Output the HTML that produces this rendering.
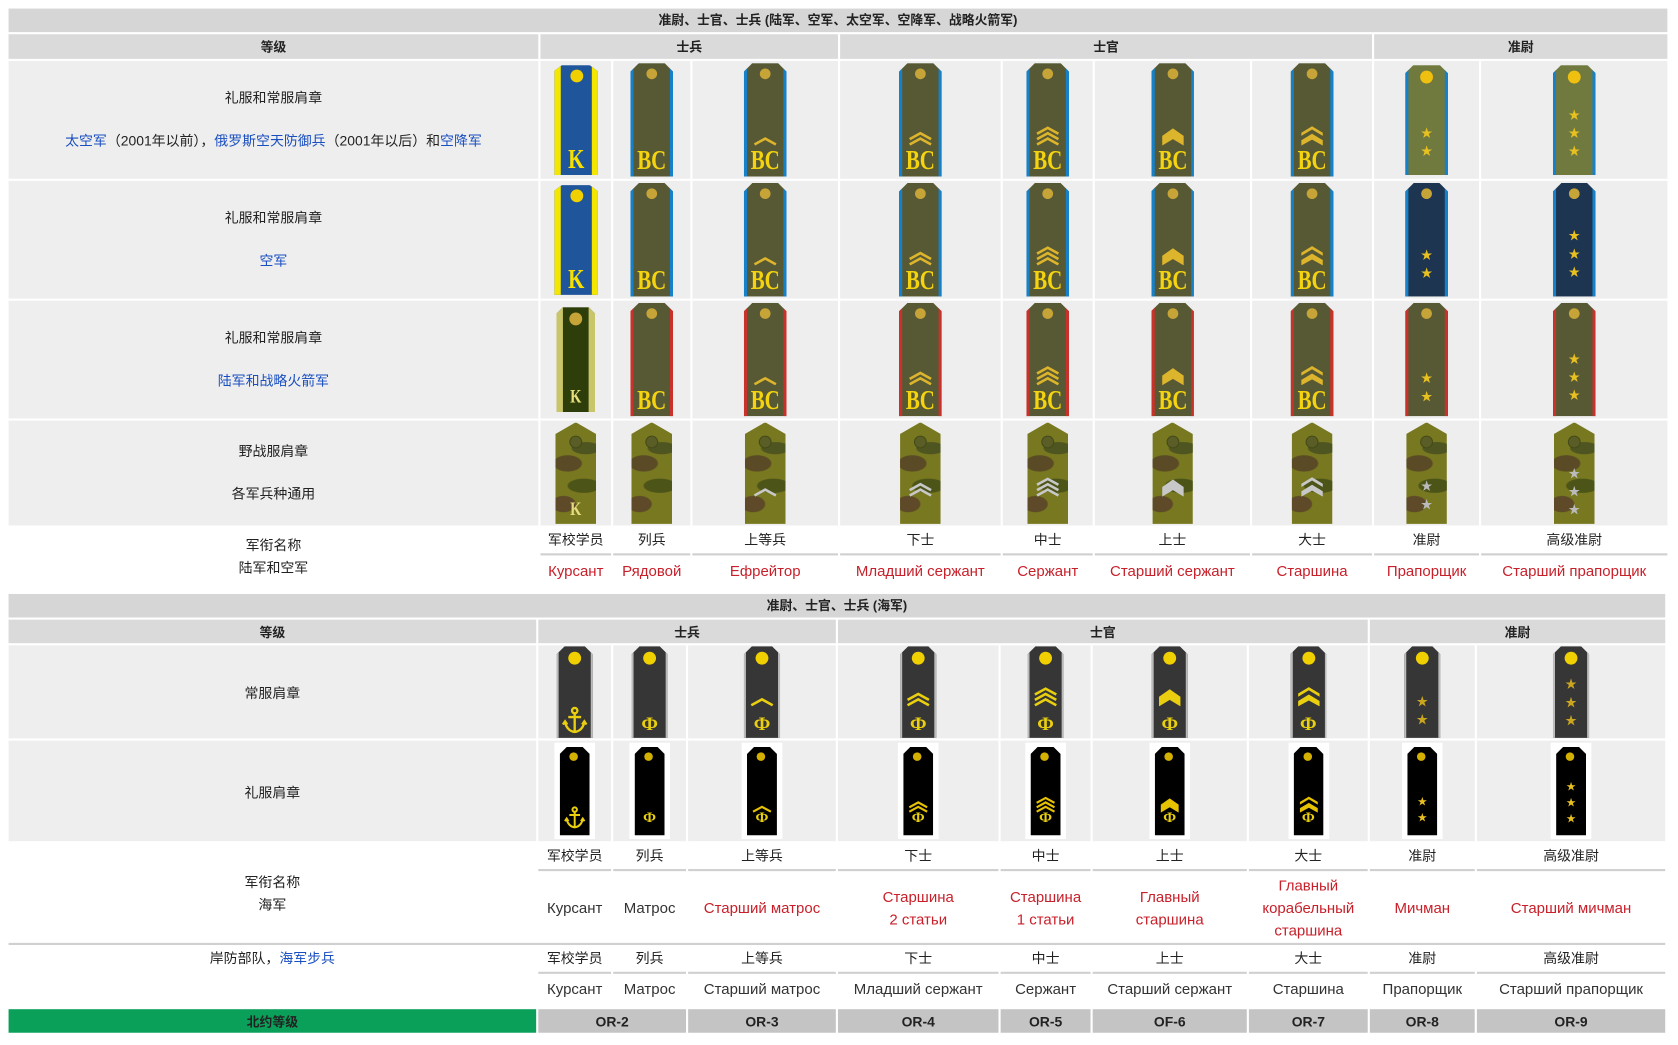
<!DOCTYPE html>
<html><head><meta charset="utf-8"><style>
body{margin:0;width:1678px;height:1045px;background:#fff;position:relative;overflow:hidden;font-family:"Liberation Sans","Noto Sans CJK SC",sans-serif;font-size:13px;color:#222}
#w{position:absolute;left:0;top:0;width:1568px;height:976px;transform:scale(1.0702);transform-origin:0 0}
.rw{position:absolute;left:8px;display:flex;gap:2px}
.rw>div{background:#eee;display:flex;align-items:center;justify-content:center;flex:none;position:relative;text-align:center}
.hd>div{background:#dadada;font-weight:bold;font-size:12px}
.t0{width:495px}.t1{width:66px}.t2{width:72px}.t3{width:136px}.t4{width:150px}.t5{width:84px}.t6{width:145px}.t7{width:112px}.t8{width:98px}.t9{width:174px}
.u0{width:493px}.u1{width:68px}.u2{width:68px}.u3{width:138px}.u4{width:150px}.u5{width:84px}.u6{width:144px}.u7{width:111px}.u8{width:98px}.u9{width:176px}
.title{position:absolute;left:8px;width:1550px;height:22px;background:#d6d6d6;font-weight:bold;font-size:12px;text-align:center;line-height:22px}
.lab{flex-direction:column;gap:20px}
.lab span{display:block;line-height:20px}
.bl{color:#1a4fc0}
.bd{position:relative;width:40px;height:106px;background:#575934;clip-path:polygon(0 8px,8px 0,32px 0,40px 8px,40px 100%,0 100%);box-shadow:inset 3px 0 #1680c8,inset -3px 0 #1680c8;color:#ddb52c}
.bd.r{box-shadow:inset 3px 0 #c8322a,inset -3px 0 #c8322a}
.bt{position:absolute;top:5px;left:15px;width:10px;height:10px;border-radius:50%;background:#c7a437}
.L{position:absolute;bottom:3px;left:0;width:100%;text-align:center;font:bold 26px/24px "Liberation Serif",serif;color:#f5d40f;transform:scaleX(.75)}
.cv{position:absolute;left:8px;bottom:29px;width:24px;height:20px}
.st{position:absolute;left:0;width:100%;text-align:center;font-size:11px;line-height:17px;color:#e8c020}
.ka{width:41px;height:103px;background:#1f559a;box-shadow:inset 6px 0 #f5e600,inset -6px 0 #f5e600;clip-path:polygon(0 6px,8px 0,33px 0,41px 6px,41px 100%,0 100%)}
.ka .bt{left:15px;top:4px;width:12px;height:12px;background:#f0d000}
.ka .L{color:#f5e000}
.kr{width:36px;height:98px;background:#2e3e0a;box-shadow:inset 6px 0 #c9c56a,inset -6px 0 #c9c56a;clip-path:polygon(0 6px,6px 0,30px 0,36px 6px,36px 100%,0 100%)}
.kr .bt{left:12px;width:12px;height:12px}
.kr .L{font-size:18px;color:#e8e07a}
.w1{width:40px;height:103px;background:#707a3f;box-shadow:inset 3px 0 #1680c8,inset -3px 0 #1680c8}
.w1 .bt{width:12px;height:12px;left:14px;background:#f0c010}
.w2{background:#1d3550}
.cm{width:38px;height:95px;box-shadow:none;clip-path:polygon(0 11px,50% 0,100% 11px,100% 100%,0 100%);background:radial-gradient(ellipse 14px 8px at 30% 40%,#5a4a25 90%,transparent),radial-gradient(ellipse 16px 7px at 70% 62%,#4d5418 90%,transparent),radial-gradient(ellipse 12px 8px at 20% 80%,#5e4a28 90%,transparent),radial-gradient(ellipse 14px 6px at 75% 25%,#4e5520 90%,transparent),#77781f;color:#c8c8c8}
.cm .bt{background:#5a5e26;border:1px solid #444a18;width:10px;height:10px;top:12px;left:13px}
.cm .L{font-size:18px;color:#e8dc80}
.n1{width:34px;height:86px;background:#363636;clip-path:polygon(0 8px,8px 0,26px 0,34px 8px,34px 100%,0 100%);box-shadow:inset 2px 0 #bbb,inset -2px 0 #bbb;color:#e9cf10}
.n1 .bt{left:11px;width:12px;height:12px;background:#f0d000}
.n1 .cv{left:5px;bottom:30px}
.fr{background:#fff;width:38px;height:90px;display:flex;align-items:center;justify-content:center}
.n2{width:28px;height:83px;background:#000;clip-path:polygon(0 7px,7px 0,21px 0,28px 7px,28px 100%,0 100%);color:#e6c200;position:relative}
.n2 .bt{left:9px;top:5px;width:8px;height:8px;background:#d4b000}
.n2 .cv{left:4px;width:20px;bottom:20px}
.F{position:absolute;bottom:4px;left:0;width:100%;text-align:center;font:bold 18px/20px "Liberation Serif",serif;color:#e9cf10}
.n2 .F{font-size:14px;bottom:6px}
.an{position:absolute;left:50%;bottom:4px;width:24px;height:26px;margin-left:-12px}
.n2 .an{width:20px;height:22px;margin-left:-10px;bottom:6px}
.nm>div{background:#fff;flex-direction:column;justify-content:flex-start}
.zh{height:24px;line-height:24px;width:100%;border-bottom:2px solid #d0d0d0;font-size:13px}
.ru{color:#c8202a;font-size:14px;line-height:28px}
.blk{color:#333}
</style></head><body>
<svg width="0" height="0" style="position:absolute">
<symbol id="c1" viewBox="0 0 24 20"><path d="M2 19L12 13.5L22 19" stroke="currentColor" stroke-width="2.4" fill="none"/></symbol>
<symbol id="c2" viewBox="0 0 24 20"><path d="M2 19L12 13.5L22 19M2 14L12 8.5L22 14" stroke="currentColor" stroke-width="2.4" fill="none"/></symbol>
<symbol id="c3" viewBox="0 0 24 20"><path d="M2 19L12 13.5L22 19M2 14L12 8.5L22 14M2 9L12 3.5L22 9" stroke="currentColor" stroke-width="2.4" fill="none"/></symbol>
<symbol id="c4" viewBox="0 0 24 20"><path d="M2 20L2 11L12 4L22 11L22 20L12 14Z" fill="currentColor"/></symbol>
<symbol id="c5" viewBox="0 0 24 20"><path d="M2 20L2 15L12 9L22 15L22 20L12 14.5Z M2 11L2 8L12 2L22 8L22 11L12 5Z" fill="currentColor"/></symbol>
<symbol id="anc" viewBox="0 0 24 26"><g stroke="#e9cf10" stroke-width="2.2" fill="none"><circle cx="12" cy="4" r="2.5"/><path d="M12 6.5V24M6 10H18M3 15Q5 23 12 24Q19 23 21 15"/><path d="M1 17L3 14L5 17M19 17L21 14L23 17"/></g></symbol>
</svg>
<div id="w">
<div class="title" style="top:8px">准尉、士官、士兵 (陆军、空军、太空军、空降军、战略火箭军)</div>
<div class="rw hd" style="top:32px;height:23px"><div class="t0">等级</div><div style="width:278px">士兵</div><div style="width:497px">士官</div><div class="t9" style="width:274px">准尉</div></div>

<div class="rw" style="top:57px;height:110px">
<div class="t0 lab"><span>礼服和常服肩章</span><span><span class="bl" style="display:inline">太空军</span>（2001年以前），<span class="bl" style="display:inline">俄罗斯空天防御兵</span>（2001年以后）和<span class="bl" style="display:inline">空降军</span></span></div>
<div class="t1"><div class="bd ka"><i class="bt"></i><b class="L">K</b></div></div>
<div class="t2"><div class="bd"><i class="bt"></i><b class="L">BC</b></div></div>
<div class="t3"><div class="bd"><i class="bt"></i><svg class="cv"><use href="#c1"/></svg><b class="L">BC</b></div></div>
<div class="t4"><div class="bd"><i class="bt"></i><svg class="cv"><use href="#c2"/></svg><b class="L">BC</b></div></div>
<div class="t5"><div class="bd"><i class="bt"></i><svg class="cv"><use href="#c3"/></svg><b class="L">BC</b></div></div>
<div class="t6"><div class="bd"><i class="bt"></i><svg class="cv"><use href="#c4"/></svg><b class="L">BC</b></div></div>
<div class="t7"><div class="bd"><i class="bt"></i><svg class="cv"><use href="#c5"/></svg><b class="L">BC</b></div></div>
<div class="t8"><div class="bd w1"><i class="bt"></i><span class="st" style="top:56px">★<br>★</span></div></div>
<div class="t9"><div class="bd w1"><i class="bt"></i><span class="st" style="top:39px">★<br>★<br>★</span></div></div>
</div>

<div class="rw" style="top:169px;height:110px">
<div class="t0 lab"><span>礼服和常服肩章</span><span class="bl">空军</span></div>
<div class="t1"><div class="bd ka"><i class="bt"></i><b class="L">K</b></div></div>
<div class="t2"><div class="bd"><i class="bt"></i><b class="L">BC</b></div></div>
<div class="t3"><div class="bd"><i class="bt"></i><svg class="cv"><use href="#c1"/></svg><b class="L">BC</b></div></div>
<div class="t4"><div class="bd"><i class="bt"></i><svg class="cv"><use href="#c2"/></svg><b class="L">BC</b></div></div>
<div class="t5"><div class="bd"><i class="bt"></i><svg class="cv"><use href="#c3"/></svg><b class="L">BC</b></div></div>
<div class="t6"><div class="bd"><i class="bt"></i><svg class="cv"><use href="#c4"/></svg><b class="L">BC</b></div></div>
<div class="t7"><div class="bd"><i class="bt"></i><svg class="cv"><use href="#c5"/></svg><b class="L">BC</b></div></div>
<div class="t8"><div class="bd w2"><i class="bt"></i><span class="st" style="top:60px">★<br>★</span></div></div>
<div class="t9"><div class="bd w2"><i class="bt"></i><span class="st" style="top:42px">★<br>★<br>★</span></div></div>
</div>

<div class="rw" style="top:281px;height:110px">
<div class="t0 lab"><span>礼服和常服肩章</span><span class="bl">陆军和战略火箭军</span></div>
<div class="t1"><div class="bd kr"><i class="bt"></i><b class="L">K</b></div></div>
<div class="t2"><div class="bd r"><i class="bt"></i><b class="L">BC</b></div></div>
<div class="t3"><div class="bd r"><i class="bt"></i><svg class="cv"><use href="#c1"/></svg><b class="L">BC</b></div></div>
<div class="t4"><div class="bd r"><i class="bt"></i><svg class="cv"><use href="#c2"/></svg><b class="L">BC</b></div></div>
<div class="t5"><div class="bd r"><i class="bt"></i><svg class="cv"><use href="#c3"/></svg><b class="L">BC</b></div></div>
<div class="t6"><div class="bd r"><i class="bt"></i><svg class="cv"><use href="#c4"/></svg><b class="L">BC</b></div></div>
<div class="t7"><div class="bd r"><i class="bt"></i><svg class="cv"><use href="#c5"/></svg><b class="L">BC</b></div></div>
<div class="t8"><div class="bd r"><i class="bt"></i><span class="st" style="top:63px">★<br>★</span></div></div>
<div class="t9"><div class="bd r"><i class="bt"></i><span class="st" style="top:45px">★<br>★<br>★</span></div></div>
</div>

<div class="rw" style="top:393px;height:98px">
<div class="t0 lab"><span>野战服肩章</span><span>各军兵种通用</span></div>
<div class="t1"><div class="bd cm"><i class="bt"></i><b class="L">K</b></div></div>
<div class="t2"><div class="bd cm"><i class="bt"></i></div></div>
<div class="t3"><div class="bd cm"><i class="bt"></i><svg class="cv" style="left:7px;bottom:26px"><use href="#c1"/></svg></div></div>
<div class="t4"><div class="bd cm"><i class="bt"></i><svg class="cv" style="left:7px;bottom:26px"><use href="#c2"/></svg></div></div>
<div class="t5"><div class="bd cm"><i class="bt"></i><svg class="cv" style="left:7px;bottom:26px"><use href="#c3"/></svg></div></div>
<div class="t6"><div class="bd cm"><i class="bt"></i><svg class="cv" style="left:7px;bottom:26px"><use href="#c4"/></svg></div></div>
<div class="t7"><div class="bd cm"><i class="bt"></i><svg class="cv" style="left:7px;bottom:26px"><use href="#c5"/></svg></div></div>
<div class="t8"><div class="bd cm"><i class="bt"></i><span class="st" style="top:52px;color:#bbb">★<br>★</span></div></div>
<div class="t9"><div class="bd cm"><i class="bt"></i><span class="st" style="top:40px;color:#bbb">★<br>★<br>★</span></div></div>
</div>

<div class="rw nm" style="top:493px;height:53px">
<div class="t0" style="justify-content:center"><span style="line-height:21px">军衔名称<br>陆军和空军</span></div>
<div class="t1"><div class="zh">军校学员</div><div class="ru">Курсант</div></div>
<div class="t2"><div class="zh">列兵</div><div class="ru">Рядовой</div></div>
<div class="t3"><div class="zh">上等兵</div><div class="ru">Ефрейтор</div></div>
<div class="t4"><div class="zh">下士</div><div class="ru">Младший сержант</div></div>
<div class="t5"><div class="zh">中士</div><div class="ru">Сержант</div></div>
<div class="t6"><div class="zh">上士</div><div class="ru">Старший сержант</div></div>
<div class="t7"><div class="zh">大士</div><div class="ru">Старшина</div></div>
<div class="t8"><div class="zh">准尉</div><div class="ru">Прапорщик</div></div>
<div class="t9"><div class="zh">高级准尉</div><div class="ru">Старший прапорщик</div></div>
</div>

<div class="title" style="top:555px;width:1548px">准尉、士官、士兵 (海军)</div>
<div class="rw hd" style="top:579px;height:22px"><div class="u0">等级</div><div style="width:278px">士兵</div><div style="width:495px">士官</div><div style="width:276px">准尉</div></div>

<div class="rw" style="top:603px;height:87px">
<div class="u0">常服肩章</div>
<div class="u1"><div class="n1 bd"><i class="bt"></i><svg class="an"><use href="#anc"/></svg></div></div>
<div class="u2"><div class="n1 bd"><i class="bt"></i><span class="F">Ф</span></div></div>
<div class="u3"><div class="n1 bd"><i class="bt"></i><svg class="cv"><use href="#c1"/></svg><span class="F">Ф</span></div></div>
<div class="u4"><div class="n1 bd"><i class="bt"></i><svg class="cv"><use href="#c2"/></svg><span class="F">Ф</span></div></div>
<div class="u5"><div class="n1 bd"><i class="bt"></i><svg class="cv"><use href="#c3"/></svg><span class="F">Ф</span></div></div>
<div class="u6"><div class="n1 bd"><i class="bt"></i><svg class="cv"><use href="#c4"/></svg><span class="F">Ф</span></div></div>
<div class="u7"><div class="n1 bd"><i class="bt"></i><svg class="cv"><use href="#c5"/></svg><span class="F">Ф</span></div></div>
<div class="u8"><div class="n1 bd"><i class="bt"></i><span class="st" style="top:44px;color:#c9a520">★<br>★</span></div></div>
<div class="u9"><div class="n1 bd"><i class="bt"></i><span class="st" style="top:28px;color:#c9a520">★<br>★<br>★</span></div></div>
</div>

<div class="rw" style="top:692px;height:94px">
<div class="u0">礼服肩章</div>
<div class="u1"><div class="fr"><div class="n2"><i class="bt"></i><svg class="an"><use href="#anc"/></svg></div></div></div>
<div class="u2"><div class="fr"><div class="n2"><i class="bt"></i><span class="F">Ф</span></div></div></div>
<div class="u3"><div class="fr"><div class="n2"><i class="bt"></i><svg class="cv"><use href="#c1"/></svg><span class="F">Ф</span></div></div></div>
<div class="u4"><div class="fr"><div class="n2"><i class="bt"></i><svg class="cv"><use href="#c2"/></svg><span class="F">Ф</span></div></div></div>
<div class="u5"><div class="fr"><div class="n2"><i class="bt"></i><svg class="cv"><use href="#c3"/></svg><span class="F">Ф</span></div></div></div>
<div class="u6"><div class="fr"><div class="n2"><i class="bt"></i><svg class="cv"><use href="#c4"/></svg><span class="F">Ф</span></div></div></div>
<div class="u7"><div class="fr"><div class="n2"><i class="bt"></i><svg class="cv"><use href="#c5"/></svg><span class="F">Ф</span></div></div></div>
<div class="u8"><div class="fr"><div class="n2"><i class="bt"></i><span class="st" style="top:44px;font-size:9px;line-height:15px">★<br>★</span></div></div></div>
<div class="u9"><div class="fr"><div class="n2"><i class="bt"></i><span class="st" style="top:30px;font-size:9px;line-height:15px">★<br>★<br>★</span></div></div></div>
</div>

<div class="rw nm" style="top:788px;height:93px">
<div class="u0" style="justify-content:center"><span style="line-height:21px">军衔名称<br>海军</span></div>
<div class="u1"><div class="zh">军校学员</div><div class="ru blk" style="line-height:68px">Курсант</div></div>
<div class="u2"><div class="zh">列兵</div><div class="ru blk" style="line-height:68px">Матрос</div></div>
<div class="u3"><div class="zh">上等兵</div><div class="ru" style="line-height:68px">Старший матрос</div></div>
<div class="u4"><div class="zh">下士</div><div class="ru" style="line-height:21px;padding-top:14px">Старшина<br>2 статьи</div></div>
<div class="u5"><div class="zh">中士</div><div class="ru" style="line-height:21px;padding-top:14px">Старшина<br>1 статьи</div></div>
<div class="u6"><div class="zh">上士</div><div class="ru" style="line-height:21px;padding-top:14px">Главный<br>старшина</div></div>
<div class="u7"><div class="zh">大士</div><div class="ru" style="line-height:21px;padding-top:3px">Главный<br>корабельный<br>старшина</div></div>
<div class="u8"><div class="zh">准尉</div><div class="ru" style="line-height:68px">Мичман</div></div>
<div class="u9"><div class="zh">高级准尉</div><div class="ru" style="line-height:68px">Старший мичман</div></div>
</div>
<div style="position:absolute;left:8px;top:881px;width:1548px;height:2px;background:#d0d0d0"></div>

<div class="rw nm" style="top:884px;height:58px">
<div class="u0" style="justify-content:flex-start"><span style="line-height:24px">岸防部队，<span class="bl">海军步兵</span></span></div>
<div class="u1"><div class="zh">军校学员</div><div class="ru blk">Курсант</div></div>
<div class="u2"><div class="zh">列兵</div><div class="ru blk">Матрос</div></div>
<div class="u3"><div class="zh">上等兵</div><div class="ru blk">Старший матрос</div></div>
<div class="u4"><div class="zh">下士</div><div class="ru blk">Младший сержант</div></div>
<div class="u5"><div class="zh">中士</div><div class="ru blk">Сержант</div></div>
<div class="u6"><div class="zh">上士</div><div class="ru blk">Старший сержант</div></div>
<div class="u7"><div class="zh">大士</div><div class="ru blk">Старшина</div></div>
<div class="u8"><div class="zh">准尉</div><div class="ru blk">Прапорщик</div></div>
<div class="u9"><div class="zh">高级准尉</div><div class="ru blk">Старший прапорщик</div></div>
</div>

<div class="rw" style="top:943px;height:22px;font-weight:bold">
<div class="u0" style="background:#0aa05a;font-size:12px">北约等级</div>
<div style="width:138px;background:#c4c4c4">OR-2</div>
<div class="u3" style="background:#c4c4c4">OR-3</div>
<div class="u4" style="background:#c4c4c4">OR-4</div>
<div class="u5" style="background:#c4c4c4">OR-5</div>
<div class="u6" style="background:#c4c4c4">OF-6</div>
<div class="u7" style="background:#c4c4c4">OR-7</div>
<div class="u8" style="background:#c4c4c4">OR-8</div>
<div class="u9" style="background:#c4c4c4">OR-9</div>
</div>
</div>
</body></html>
